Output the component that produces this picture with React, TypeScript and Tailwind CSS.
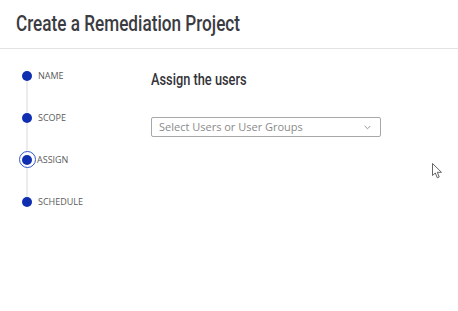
import React from "react";

const steps = [
  { label: "NAME", active: false },
  { label: "SCOPE", active: false },
  { label: "ASSIGN", active: true },
  { label: "SCHEDULE", active: false },
];

export default function App() {
  return (
    <div className="relative w-[458px] h-[311px] bg-white overflow-hidden" style={{ fontFamily: '"Open Sans", "Noto Sans", sans-serif' }}>
      <div className="h-[49px] border-b border-[#e3e3e3] pl-[16px] pt-[11px]">
        <span
          className="inline-block origin-left scale-x-[0.78] text-[22px] leading-[26px] text-[#3b3b42] whitespace-nowrap"
          style={{ fontFamily: '"Roboto", sans-serif', fontWeight: 500 }}
        >
          Create a Remediation Project
        </span>
      </div>
      <div className="flex">
        <div className="w-[130px] pl-[19px] pt-[20px] relative">
          <div className="absolute left-[26px] top-[30px] w-[2px] h-[126px] bg-[#ececec]" />
          <div className="flex flex-col gap-[29px]">
            {steps.map((s) => (
              <div key={s.label} className="relative flex items-center h-[13px]">
                <div className="w-[16px] flex items-center justify-center">
                  {s.active ? (
                    <div className="w-[17px] h-[17px] shrink-0 rounded-full border-[1.5px] border-[#3355cc] bg-white flex items-center justify-center">
                      <div className="w-[10px] h-[10px] rounded-full bg-[#0f2fb0]" />
                    </div>
                  ) : (
                    <div className="w-[10px] h-[10px] rounded-full bg-[#0f2fb0]" />
                  )}
                </div>
                <span className={`text-[9px] text-[#5a5a5a] ${s.active ? "ml-[2px]" : "ml-[3px]"}`}>{s.label}</span>
              </div>
            ))}
          </div>
        </div>
        <div className="pl-[21px] pt-[18px]">
          <div
            className="inline-block origin-left scale-x-[0.8] text-[16px] leading-[20px] text-[#333338] whitespace-nowrap"
            style={{ fontFamily: '"Roboto", sans-serif', fontWeight: 500 }}
          >
            Assign the users
          </div>
          <div className="mt-[26px] w-[230px] h-[20px] border border-[#a8a8a8] rounded-[2px] flex items-center justify-between pl-[7px] pr-[9px]">
            <span className="text-[11px] text-[#8a8a8a]">Select Users or User Groups</span>
            <svg width="7" height="5" viewBox="0 0 7 5">
              <path d="M0.7 1 L3.5 3.8 L6.3 1" fill="none" stroke="#888" strokeWidth="0.9" />
            </svg>
          </div>
        </div>
      </div>
      <svg className="absolute left-[432px] top-[163px]" width="11" height="16" viewBox="0 0 11 16">
        <path d="M0.5 0.5 L0.5 12.5 L3.3 10 L5.3 14.8 L7.2 14 L5.3 9.3 L9.5 9.3 Z" fill="white" stroke="#555" strokeWidth="0.9" strokeLinejoin="round" />
      </svg>
    </div>
  );
}
